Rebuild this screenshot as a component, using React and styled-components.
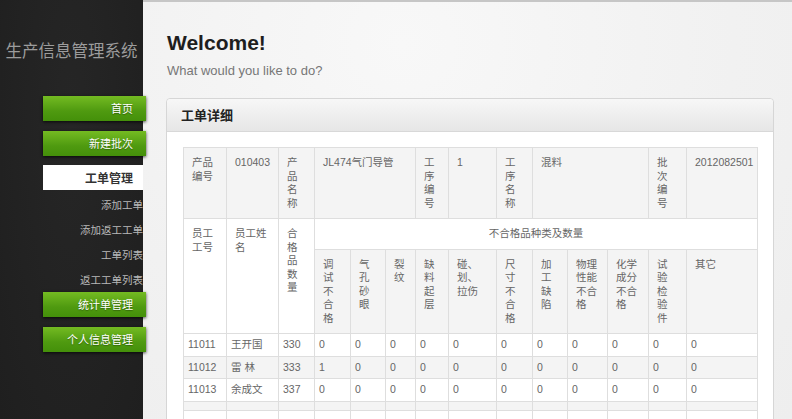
import React from "react";
import styled, { createGlobalStyle } from "styled-components";

const Global = createGlobalStyle`
  html, body { margin: 0; padding: 0; height: 100%; overflow: hidden; }
  body {
    font-family: "Liberation Sans", "Noto Sans CJK SC", sans-serif;
    background: #f1f1f1;
  }
`;

const Shell = styled.div`
  display: flex;
  height: 100vh;
`;

const Sidebar = styled.aside`
  width: 143px;
  flex: none;
  position: relative;
  z-index: 1;
  background: radial-gradient(ellipse at 50% 30%, #262626 0%, #1f1f1f 100%);
  display: flex;
  flex-direction: column;
`;

const Brand = styled.div`
  padding-top: 40px;
  height: 20px;
  line-height: 20px;
  text-align: center;
  font-family: "Noto Sans CJK SC", sans-serif;
  font-size: 16.5px;
  color: #9c9c9c;
  white-space: nowrap;
`;

const Nav = styled.nav`
  margin-top: 36px;
  padding-left: 43px;
  display: flex;
  flex-direction: column;
  align-items: flex-start;
`;

const NavButton = styled.a`
  display: block;
  box-sizing: border-box;
  width: 103px;
  height: 25px;
  line-height: 25px;
  padding-right: 13px;
  margin-bottom: ${(p) => (p.$last ? 0 : 10)}px;
  text-align: right;
  font-family: "Noto Sans CJK SC", sans-serif;
  font-size: 11px;
  color: #fff;
  text-shadow: 0 1px 1px rgba(0, 0, 0, 0.35);
  background: linear-gradient(#74bb22, #4f9a10 60%, #44900a);
  box-shadow: 0 1px 3px rgba(0, 0, 0, 0.75);
  text-decoration: none;
`;

const ActiveItem = styled.div`
  box-sizing: border-box;
  width: 100px;
  height: 25px;
  line-height: 25px;
  margin-top: -1px;
  padding-right: 10px;
  text-align: right;
  background: #fff;
  font-family: "Noto Sans CJK SC", sans-serif;
  font-size: 12px;
  font-weight: bold;
  color: #333;
`;

const SubList = styled.div`
  margin-top: 2px;
  width: 100px;
  display: flex;
  flex-direction: column;
`;

const SubItem = styled.a`
  display: block;
  height: 25px;
  line-height: 25px;
  text-align: right;
  font-family: "Noto Sans CJK SC", sans-serif;
  font-size: 10.5px;
  color: #b8b8b8;
  white-space: nowrap;
  text-decoration: none;
`;

const Main = styled.main`
  flex: 1;
  min-width: 0;
  border-top: 2px solid #c6c6c6;
  padding: 29px 18px 0 23px;
  background: radial-gradient(ellipse at 40% 10%, #f8f8f8 0%, #f1f1f1 60%, #eeeeee 100%);
`;

const Title = styled.h1`
  margin: 0 0 0 1px;
  font-size: 21px;
  line-height: 24px;
  font-weight: bold;
  color: #1e1e1e;
`;

const Subtitle = styled.p`
  margin: 8px 0 0 1px;
  font-size: 13px;
  line-height: 16px;
  color: #777;
`;

const Panel = styled.section`
  margin-top: 19px;
  border: 1px solid #d6d6d6;
  border-radius: 4px 4px 0 0;
  background: #fff;
`;

const PanelHead = styled.header`
  height: 32px;
  line-height: 32px;
  padding-left: 14px;
  border-bottom: 1px solid #d8d8d8;
  border-radius: 4px 4px 0 0;
  background: linear-gradient(#f7f7f7, #e6e6e6);
  font-family: "Noto Sans CJK SC", sans-serif;
  font-size: 13px;
  font-weight: bold;
  color: #222;
`;

const PanelBody = styled.div`
  padding: 15px 16px 0;
`;

const Table = styled.table`
  width: 100%;
  table-layout: fixed;
  border-collapse: collapse;
  border: 1px solid #dcdcdc;
  font-size: 10.5px;
  line-height: 13.5px;
  color: #666;

  tr:nth-child(odd) > * {
    background: #f4f4f4;
  }
`;

const Th = styled.th`
  padding: 8px;
  border: 1px solid #dedede;
  vertical-align: top;
  text-align: ${(p) => (p.$center ? "center" : "left")};
  font-weight: normal;
  white-space: nowrap;
`;

const Td = styled.td`
  padding: 4px;
  border: 1px solid #dedede;
  vertical-align: top;
  white-space: nowrap;
`;

const widths = [43, 52, 36, 36, 35, 30, 33, 48, 36, 35, 40, 41, 38, 71];

const Label = ({ text }) =>
  text.split("|").map((line, i, arr) => (
    <React.Fragment key={i}>
      {line}
      {i < arr.length - 1 && <br />}
    </React.Fragment>
  ));

const defectHeads = [
  "调|试|不|合|格",
  "气|孔|砂|眼",
  "裂|纹",
  "缺|料|起|层",
  "碰、|划、|拉伤",
  "尺|寸|不|合|格",
  "加|工|缺|陷",
  "物理|性能|不合|格",
  "化学|成分|不合|格",
  "试|验|检|验|件",
  "其它",
];

const rows = [
  ["11011", "王开国", "330", 0, 0, 0, 0, 0, 0, 0, 0, 0, 0, 0],
  ["11012", "雷 林", "333", 1, 0, 0, 0, 0, 0, 0, 0, 0, 0, 0],
  ["11013", "余成文", "337", 0, 0, 0, 0, 0, 0, 0, 0, 0, 0, 0],
];

export default function App() {
  return (
    <>
      <Global />
      <Shell>
        <Sidebar>
          <Brand>生产信息管理系统</Brand>
          <Nav>
            <NavButton>首页</NavButton>
            <NavButton>新建批次</NavButton>
            <ActiveItem>工单管理</ActiveItem>
            <SubList>
              <SubItem>添加工单</SubItem>
              <SubItem>添加返工工单</SubItem>
              <SubItem>工单列表</SubItem>
              <SubItem>返工工单列表</SubItem>
            </SubList>
            <NavButton>统计单管理</NavButton>
            <NavButton $last>个人信息管理</NavButton>
          </Nav>
        </Sidebar>
        <Main>
          <Title>Welcome!</Title>
          <Subtitle>What would you like to do?</Subtitle>
          <Panel>
            <PanelHead>工单详细</PanelHead>
            <PanelBody>
              <Table>
                <colgroup>
                  {widths.map((w, i) => (
                    <col key={i} style={{ width: w }} />
                  ))}
                </colgroup>
                <tbody>
                  <tr>
                    <Th><Label text="产品|编号" /></Th>
                    <Th>010403</Th>
                    <Th><Label text="产|品|名|称" /></Th>
                    <Th colSpan={3}>JL474气门导管</Th>
                    <Th><Label text="工|序|编|号" /></Th>
                    <Th>1</Th>
                    <Th><Label text="工|序|名|称" /></Th>
                    <Th colSpan={3}>混料</Th>
                    <Th><Label text="批|次|编|号" /></Th>
                    <Th>2012082501</Th>
                  </tr>
                  <tr>
                    <Th rowSpan={2}><Label text="员工|工号" /></Th>
                    <Th rowSpan={2}><Label text="员工姓|名" /></Th>
                    <Th rowSpan={2}><Label text="合|格|品|数|量" /></Th>
                    <Th colSpan={11} $center>不合格品种类及数量</Th>
                  </tr>
                  <tr>
                    {defectHeads.map((h, i) => (
                      <Th key={i}><Label text={h} /></Th>
                    ))}
                  </tr>
                  {rows.map((r, i) => (
                    <tr key={i}>
                      {r.map((c, j) => (
                        <Td key={j}>{c}</Td>
                      ))}
                    </tr>
                  ))}
                  {[0, 1, 2].map((i) => (
                    <tr key={"e" + i}>
                      {widths.map((_, j) => (
                        <Td key={j} />
                      ))}
                    </tr>
                  ))}
                </tbody>
              </Table>
            </PanelBody>
          </Panel>
        </Main>
      </Shell>
    </>
  );
}
